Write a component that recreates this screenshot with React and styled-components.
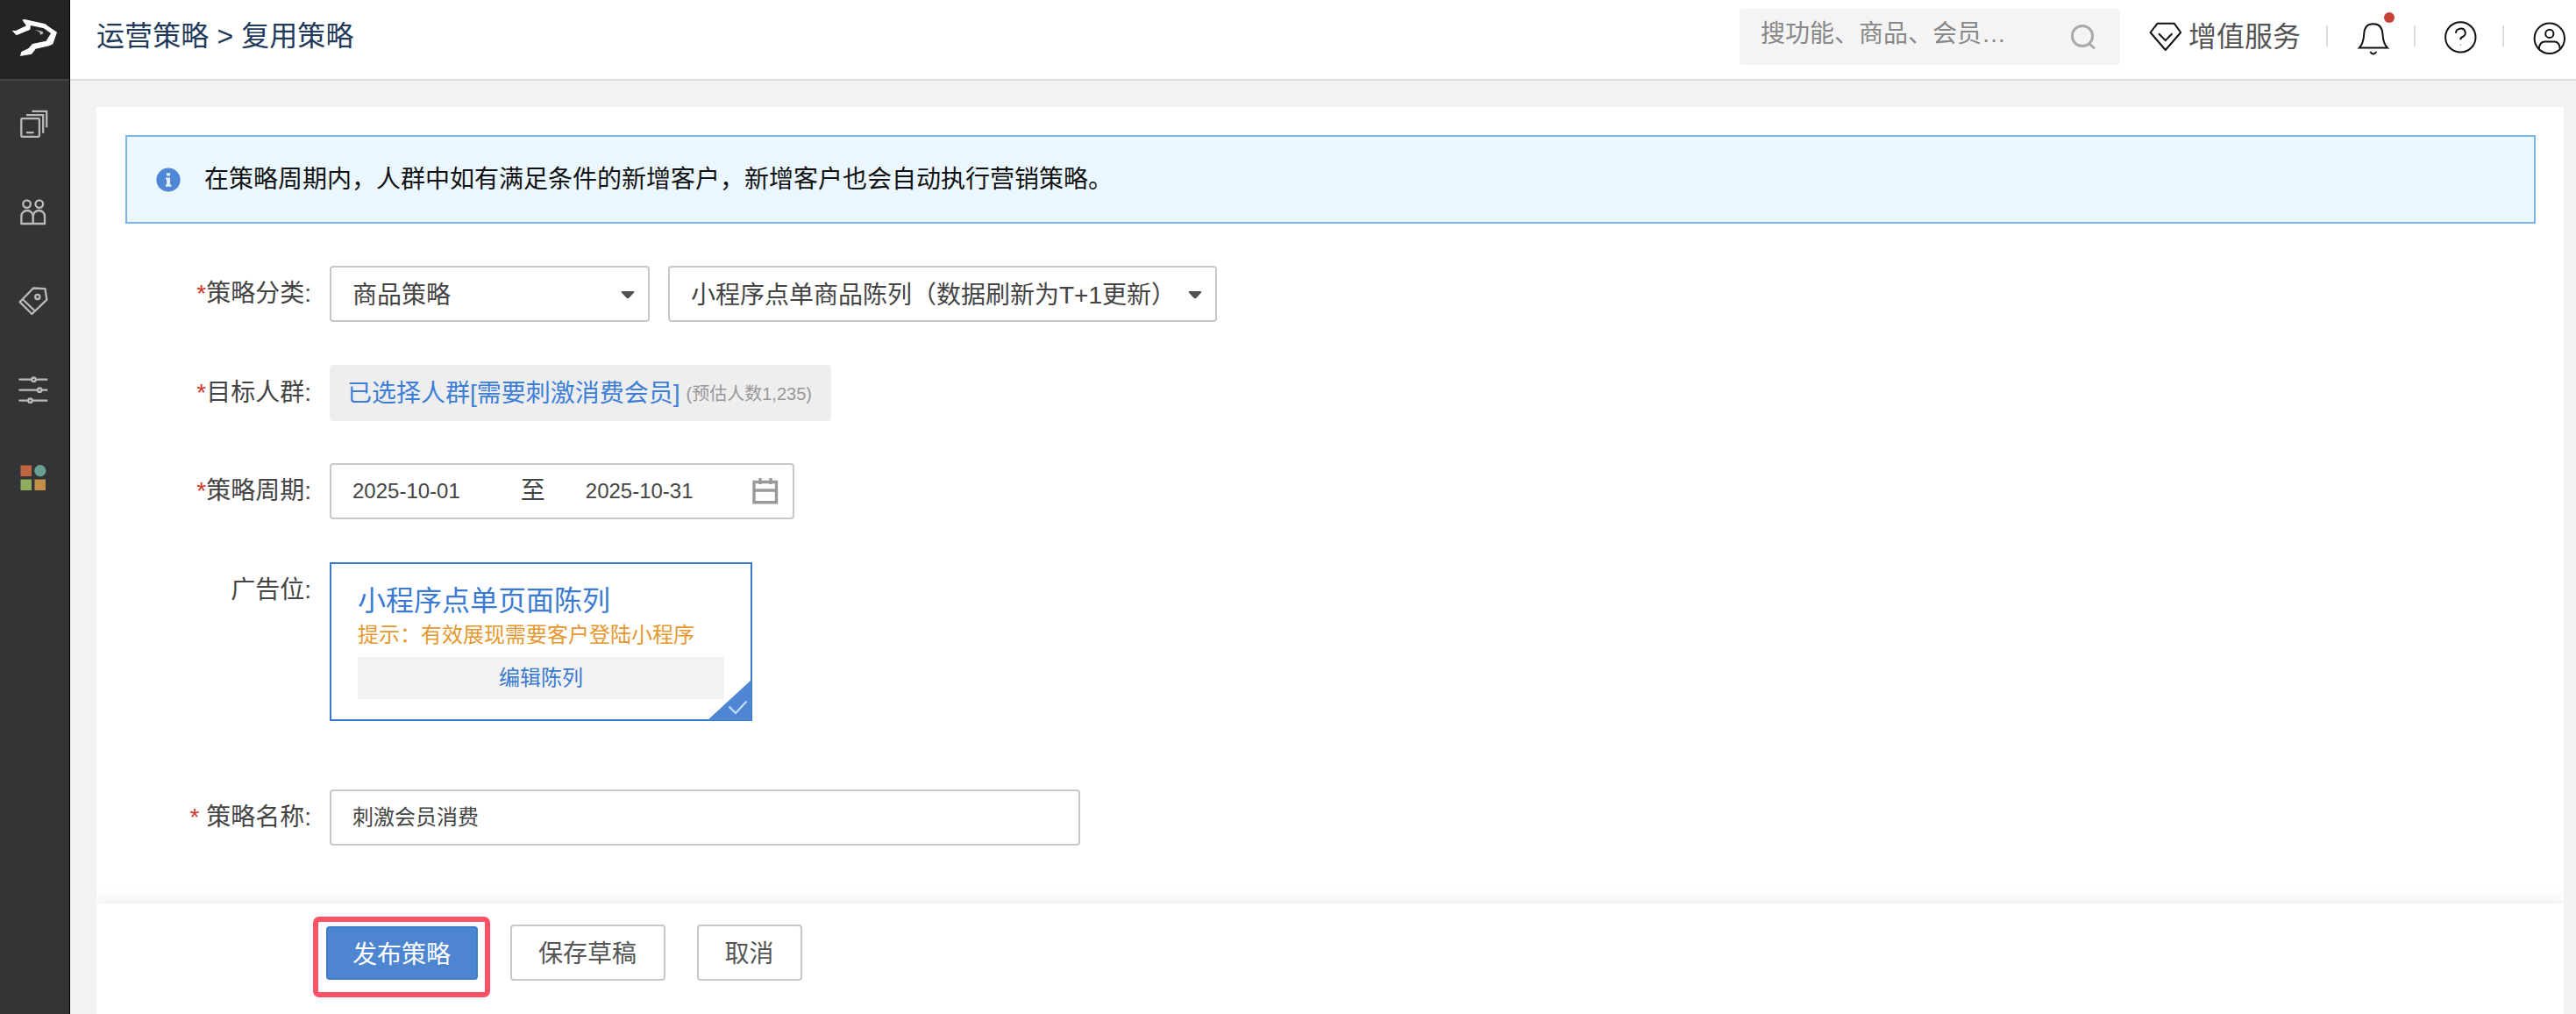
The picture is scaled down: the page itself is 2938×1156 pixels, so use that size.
import React from 'react';
import styled, { createGlobalStyle } from 'styled-components';

const GlobalStyle = createGlobalStyle`
* {
  box-sizing: border-box;
}
body {
  margin: 0;
  background-color: #f2f2f2;
  color: #444444;
  font-family: "Liberation Sans", "Noto Sans CJK SC", sans-serif;
  font-size: 28px;
  line-height: 40px;
}
`

const StyledPage = styled.div`
display: flex;
width: 2938px;
height: 1156px;
overflow: hidden;
`

const StyledSidebar = styled.nav`
display: flex;
flex-direction: column;
flex: none;
width: 80px;
background-color: #333436;
border-right: 1px solid #000000;
`

const StyledLogo = styled.div`
height: 92px;
background-color: #262422;
border-bottom: 2px solid #444446;
svg {
    display: block;
  }
`

const StyledMenu = styled.div`
display: flex;
flex-direction: column;
align-items: center;
gap: 65px;
padding: 31px 3px 0 0;
`

const StyledMain = styled.div`
display: flex;
flex-direction: column;
flex: 1;
min-width: 0;
`

const StyledHeader = styled.header`
display: flex;
align-items: center;
flex: none;
height: 92px;
padding: 0 11px 0 30px;
background-color: #ffffff;
border-bottom: 2px solid #dcdcdc;
`

const StyledTitle = styled.div`
margin-right: auto;
padding-bottom: 8px;
font-size: 32px;
letter-spacing: 0.1px;
color: #1f3a5a;
white-space: pre;
`

const StyledSearch = styled.div`
display: flex;
align-items: center;
justify-content: space-between;
width: 434px;
height: 64px;
margin: 0 33px 6px 0;
padding: 0 27px 0 24px;
background-color: #f4f4f4;
border-radius: 4px;
color: #888888;
span {
    padding-bottom: 7px;
  }
`

const StyledService = styled.div`
display: flex;
align-items: center;
gap: 7px;
margin-right: 29px;
font-size: 32px;
color: #555555;
span {
    padding-bottom: 6px;
  }
`

const StyledDivider = styled.i`
width: 2px;
height: 24px;
margin-bottom: 8px;
background-color: #dddddd;
`

const StyledHeaderIcon = styled.div`
position: relative;
width: 38px;
height: 44px;
margin: 0 ${({ $right }) => $right || 0}px 0 ${({ $left }) => $left}px;
`

const StyledDot = styled.b`
position: absolute;
top: -9px;
left: 31px;
width: 12px;
height: 12px;
border-radius: 50%;
background-color: #c64237;
`

const StyledPanel = styled.main`
display: flex;
flex-direction: column;
flex: 1;
margin: 30px 14px 0 30px;
background-color: #ffffff;
`

const StyledNotice = styled.div`
display: flex;
align-items: center;
gap: 27px;
height: 101px;
margin: 32px 32px 48px 33px;
padding: 0 33px;
background-color: #ebf7fe;
border: 2px solid #7ab6ea;
color: #111111;
span {
    padding-top: 1px;
  }
`

const StyledForm = styled.div`
display: flex;
flex-direction: column;
flex: 1;
`

const StyledRow = styled.div`
display: grid;
grid-template-columns: 246px auto;
column-gap: 20px;
justify-content: start;
margin-bottom: ${({ $bottom }) => $bottom || 48.5}px;
`

const StyledLabel = styled.label`
padding: 12px 1px 0 0;
text-align: right;
white-space: pre;
em {
    font-style: normal;
    color: #cc3a2c;
  }
`

const StyledFields = styled.div`
display: flex;
gap: 21px;
`

const StyledField = styled.div`
display: flex;
align-items: center;
width: ${({ $width }) => $width}px;
height: 64px;
padding: ${({ $small }) => ($small ? 0 : 3)}px 15px 0 24px;
border: 2px solid #c8c8c8;
border-radius: 4px;
background-color: #ffffff;
font-size: ${({ $small }) => ($small ? 24 : 28)}px;
white-space: nowrap;
color: #444444;
svg {
    margin-left: auto;
  }
`

const StyledTo = styled.span`
margin: 0 46px 1px 69px;
font-size: 28px;
`

const StyledCrowd = styled.div`
display: flex;
align-items: center;
width: 572px;
height: 64px;
padding: 2px 0 0 20px;
background-color: #eeeeee;
border-radius: 4px;
color: #3d7fd8;
small {
    margin-left: 7px;
    font-size: 20px;
    color: #999999;
  }
`

const StyledCard = styled.div`
position: relative;
width: 482px;
height: 181px;
padding: 21px 30px 0;
border: 2px solid #3a78cc;
svg {
    position: absolute;
    right: -1px;
    bottom: -1px;
  }
`

const StyledCardTitle = styled.div`
font-size: 32px;
line-height: 42px;
color: #3a7ad0;
`

const StyledCardTip = styled.div`
font-size: 24px;
line-height: 36px;
color: #e6982f;
`

const StyledCardButton = styled.div`
height: 48px;
margin-top: 7px;
background-color: #f2f2f2;
font-size: 24px;
line-height: 47px;
text-align: center;
color: #3a7ad0;
`

const StyledFooter = styled.footer`
display: flex;
align-items: flex-start;
height: 126px;
padding: 15px 0 0 247px;
background-color: #ffffff;
box-shadow: 0 0 18px rgba(0, 0, 0, 0.12);
clip-path: inset(-30px 0 0 0);
`

const StyledHighlight = styled.div`
width: 202px;
height: 92px;
margin-right: 23px;
padding: 5px 0 0 9px;
border: 6px solid #ff5166;
border-radius: 7px;
`

const StyledButton = styled.button`
display: flex;
align-items: center;
justify-content: center;
width: ${({ $width }) => $width}px;
height: ${({ $primary }) => ($primary ? 61 : 64)}px;
margin: ${({ $primary }) => ($primary ? '0' : '9px 36px 0 0')};
padding: 0 1px 2px 0;
border: 2px solid ${({ $primary }) => ($primary ? '#3f7bcb' : '#c8c8c8')};
border-radius: 4px;
background-color: ${({ $primary }) => ($primary ? '#4d85d1' : '#ffffff')};
color: ${({ $primary }) => ($primary ? '#ffffff' : '#555555')};
font-family: inherit;
font-size: 28px;
`

const StyledHeaderSvg = styled.svg`
display: block;
fill: none;
stroke: #111111;
stroke-width: 2px;
`

const HeaderSvg = ({ children }) => (
    <StyledHeaderSvg width='38' height='44' viewBox='0 0 38 44'>{children}</StyledHeaderSvg>
)

const menuIcons = [
    {
        id: 'pages',
        icon: <>
            <rect x='4.3' y='12.2' width='20.6' height='20.6' rx='1' />
            <path d='M10 8.2h19.2v20.6M16.5 3.8h16.7v18.5M10 28.2h8.5' />
        </>,
    },
    {
        id: 'members',
        icon: <>
            <circle cx='10.6' cy='8.6' r='4.3' />
            <circle cx='24.8' cy='8.6' r='4.3' />
            <path d='M4.4 31V22.6a6.6 6.6 0 0 1 13.2 0V31zM17.8 31V22.6a6.6 6.6 0 0 1 13.2 0V31z' />
        </>,
    },
    {
        id: 'tags',
        icon: <>
            <path d='M18 3.5l13.4 .6 2 12.6L16.4 33 2.6 19.2zM6 16.2l14 13.6' strokeLinejoin='round' />
            <circle cx='22.8' cy='13.4' r='2.6' />
        </>,
    },
    {
        id: 'settings',
        icon: <>
            <path d='M1.5 6.7h14.7M20.8 6.7h13.4M1.5 18.7h21.4M27.5 18.7h6.7M1.5 30.7h10.7M16.8 30.7h17.4' />
            <circle cx='18.5' cy='6.7' r='2.2' />
            <circle cx='25.2' cy='18.7' r='2.2' />
            <circle cx='14.5' cy='30.7' r='2.2' />
        </>,
    },
    {
        id: 'apps',
        icon: <g stroke='none'>
            <rect x='3.5' y='3.5' width='12.5' height='12.5' fill='#bf6540' />
            <circle cx='25.8' cy='9.7' r='6.6' fill='#6b9f94' />
            <rect x='3.5' y='19.5' width='12.5' height='12.5' fill='#8eae5e' />
            <rect x='19.5' y='19.5' width='12.5' height='12.5' fill='#c48f48' />
        </g>,
    },
]

const Arrow = () => (
    <svg width='16' height='9' viewBox='0 0 16 9'><path d='M1.5 0h13q1.5 .2 .6 1.6L9.6 7.6Q8 9 6.4 7.6L.9 1.6Q0 .2 1.5 0z' fill='#505050' /></svg>
)

function Row ({ label, required, spaced, bottom, children }) {
    return (
        <StyledRow $bottom={bottom}>
            <StyledLabel>{required ? <em>*</em> : ''}{spaced ? ' ' : ''}{label}:</StyledLabel>
            <StyledFields>{children}</StyledFields>
        </StyledRow>)
}

function Sidebar () {
    return (
        <StyledSidebar>
            <StyledLogo>
                <svg width='79' height='90' viewBox='0 0 237 270' fill='#ffffff'>
                    <path d='M41 104L54 105 90 88 76 68 84 66 155 82 165 90 195 110 181 151 168 157 122 167 108 185 69 192 73 177 97 166 111 150 158 140 174 114 150 97 105 87 103 101 56 121z' />
                    <path d='M120 101L146 108 148 115 138 119 136 110z' opacity='.7' />
                </svg>
            </StyledLogo>
            <StyledMenu>
                {menuIcons.map(({ id, icon }) =>
                    <svg key={id} width='36' height='36' viewBox='0 0 36 36' fill='none' stroke='#b9bbbb' strokeWidth='2.3'>{icon}</svg>)}
            </StyledMenu>
        </StyledSidebar>)
}

function Header () {
    return (
        <StyledHeader>
            <StyledTitle>运营策略 &gt; 复用策略</StyledTitle>
            <StyledSearch>
                <span>搜功能、商品、会员…</span>
                <svg width='30' height='30' viewBox='0 0 30 30' fill='none' stroke='#a9a9a9' strokeWidth='3'>
                    <circle cx='14' cy='14' r='11.6' />
                    <path d='M21.5 22.5l6.5 6' />
                </svg>
            </StyledSearch>
            <StyledService>
                <HeaderSvg>
                    <path d='M9.5 3.8h19.4l7.3 10.2-17.4 20L1.6 14z' strokeLinejoin='round' />
                    <path d='M11 15.3l7.8 7.8 7.6-7.8' />
                </HeaderSvg>
                <span>增值服务</span>
            </StyledService>
            <StyledDivider />
            <StyledHeaderIcon $left={33} $right={27}>
                <HeaderSvg>
                    <path d='M2.8 31.6C6.4 28 7.6 24 8.2 16.5 8.4 8 12 4.3 18.8 4.3s10.4 3.7 10.7 12.2C30 24 31.3 28 35 31.6z' />
                    <path d='M15.2 36q3.6 5 7.2 0' />
                </HeaderSvg>
                <StyledDot />
            </StyledHeaderIcon>
            <StyledDivider />
            <StyledHeaderIcon $left={32} $right={29}>
                <HeaderSvg>
                    <circle cx='19.3' cy='19.4' r='17.2' />
                    <path d='M14 14.7a5.4 4.9 0 1 1 7.6 4.3q-2.3 1-2.3 3.3' />
                    <circle cx='19.3' cy='28' r='.7' stroke='none' fill='#777777' />
                </HeaderSvg>
            </StyledHeaderIcon>
            <StyledDivider />
            <StyledHeaderIcon $left={33}>
                <HeaderSvg>
                    <circle cx='18.8' cy='20.8' r='17.2' />
                    <circle cx='18.8' cy='15.4' r='4.6' />
                    <path d='M6.8 33.2c.3-5.5 2.6-8.6 6.6-8.6h10.8c4 0 6.3 3.1 6.6 8.6' />
                </HeaderSvg>
            </StyledHeaderIcon>
        </StyledHeader>)
}

export default function App () {
    return (
        <StyledPage>
            <GlobalStyle />
            <Sidebar />
            <StyledMain>
                <Header />
                <StyledPanel>
                    <StyledNotice>
                        <svg width='28' height='28' viewBox='0 0 28 28'>
                            <circle cx='14' cy='14' r='13.6' fill='#4f86d6' />
                            <path d='M12 6.2h4v3.4h-4zM11 11.5h5v8h1.4v2.2h-6.6v-2.2H12v-5.8h-1z' fill='#e3edfa' />
                        </svg>
                        <span>在策略周期内，人群中如有满足条件的新增客户，新增客户也会自动执行营销策略。</span>
                    </StyledNotice>
                    <StyledForm>
                        <Row label='策略分类' required>
                            <StyledField $width={365}>商品策略<Arrow /></StyledField>
                            <StyledField $width={626}>小程序点单商品陈列（数据刷新为T+1更新）<Arrow /></StyledField>
                        </Row>
                        <Row label='目标人群' required>
                            <StyledCrowd>已选择人群[需要刺激消费会员]<small>(预估人数1,235)</small></StyledCrowd>
                        </Row>
                        <Row label='策略周期' required>
                            <StyledField $width={530} $small>
                                2025-10-01
                                <StyledTo>至</StyledTo>
                                2025-10-31
                                <svg width='31' height='30' viewBox='0 0 31 30' fill='none' stroke='#999999' strokeWidth='3.4'>
                                    <path d='M2 4.5h25.5v23.3H2zM2 14h25.5M9 0v7M21 0v7' />
                                </svg>
                            </StyledField>
                        </Row>
                        <Row label='广告位' bottom={78}>
                            <StyledCard>
                                <StyledCardTitle>小程序点单页面陈列</StyledCardTitle>
                                <StyledCardTip>提示：有效展现需要客户登陆小程序</StyledCardTip>
                                <StyledCardButton>编辑陈列</StyledCardButton>
                                <svg width='50' height='46' viewBox='0 0 50 46' fill='none'>
                                    <path d='M50 0v46H0z' fill='#4f86d3' />
                                    <path d='M24.5 30.5l7.5 7.5 12.5-13.5' stroke='#c5dcf7' strokeWidth='2.2' />
                                </svg>
                            </StyledCard>
                        </Row>
                        <Row label='策略名称' required spaced>
                            <StyledField $width={856} $small>刺激会员消费</StyledField>
                        </Row>
                    </StyledForm>
                    <StyledFooter>
                        <StyledHighlight>
                            <StyledButton $primary $width={173}>发布策略</StyledButton>
                        </StyledHighlight>
                        <StyledButton $width={177}>保存草稿</StyledButton>
                        <StyledButton $width={120}>取消</StyledButton>
                    </StyledFooter>
                </StyledPanel>
            </StyledMain>
        </StyledPage>)
}
